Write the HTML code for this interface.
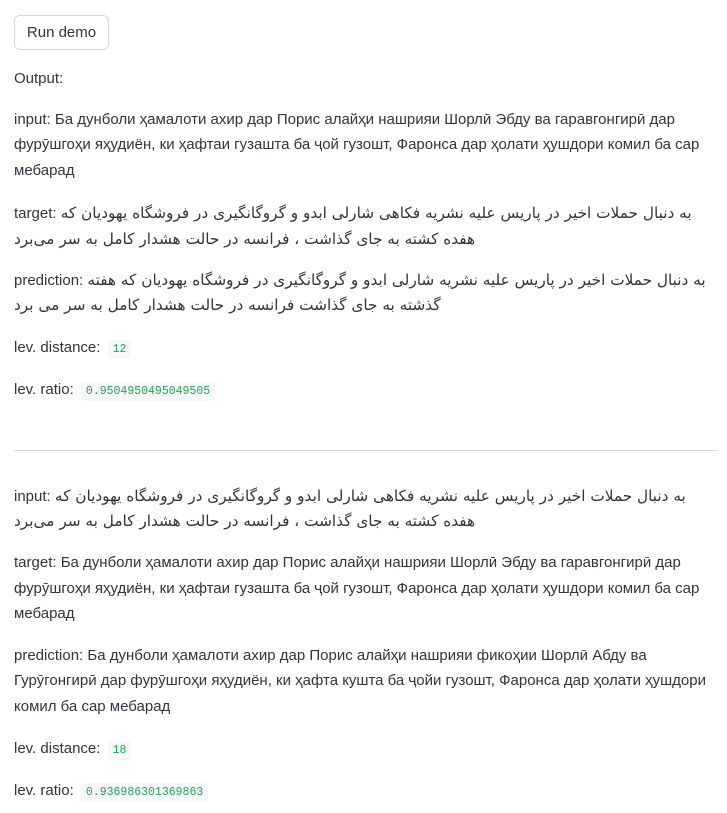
<!DOCTYPE html>
<html><head><meta charset="utf-8"><style>
body{margin:0;background:#fff;color:#31333f;font-family:"Liberation Sans","DejaVu Sans",sans-serif;font-size:15px;width:727px;height:813px;overflow:hidden;position:relative}
.l{position:absolute;left:14px;white-space:nowrap;line-height:20px;height:20px}
.btn{position:absolute;left:14px;top:15px;width:93px;height:33px;border:1px solid #d6d6d9;border-radius:6px;text-align:center;line-height:33px;font-size:15px}
code{font-family:"Liberation Mono","DejaVu Sans Mono",monospace;font-size:11.5px;color:#21a355;background:#f6f7f9;padding:3px 5px;border-radius:4px;margin-left:3px}
.hr{position:absolute;left:14px;width:704px;top:450px;height:1px;background:#d8d8dc}
.fa{font-family:"DejaVu Sans",sans-serif;font-size:15.3px}
</style></head><body>
<div class="btn">Run demo</div>
<div class="l" style="top:69px">Output:</div>

<div class="l" style="top:110px">input: Ба дунболи ҳамалоти ахир дар Порис алайҳи нашрияи Шорлӣ Эбду ва гаравгонгирӣ дар</div>
<div class="l" style="top:135px">фурӯшгоҳи яҳудиён, ки ҳафтаи гузашта ба ҷой гузошт, Фаронса дар ҳолати ҳушдори комил ба сар</div>
<div class="l" style="top:161px">мебарад</div>

<div class="l" style="top:203px">target: <span class="fa">به دنبال حملات اخیر در پاریس علیه نشریه فکاهی شارلی ابدو و گروگانگیری در فروشگاه یهودیان که</span></div>
<div class="l fa" style="top:229px">هفده کشته به جای گذاشت ، فرانسه در حالت هشدار کامل به سر می‌برد</div>

<div class="l" style="top:270px">prediction: <span class="fa">به دنبال حملات اخیر در پاریس علیه نشریه شارلی ابدو و گروگانگیری در فروشگاه یهودیان که هفته</span></div>
<div class="l fa" style="top:295px">گذشته به جای گذاشت فرانسه در حالت هشدار کامل به سر می برد</div>

<div class="l" style="top:338px">lev. distance: <code>12</code></div>
<div class="l" style="top:380px">lev. ratio: <code>0.9504950495049505</code></div>

<div class="hr"></div>

<div class="l" style="top:486px">input: <span class="fa">به دنبال حملات اخیر در پاریس علیه نشریه فکاهی شارلی ابدو و گروگانگیری در فروشگاه یهودیان که</span></div>
<div class="l fa" style="top:511px">هفده کشته به جای گذاشت ، فرانسه در حالت هشدار کامل به سر می‌برد</div>

<div class="l" style="top:553px">target: Ба дунболи ҳамалоти ахир дар Порис алайҳи нашрияи Шорлӣ Эбду ва гаравгонгирӣ дар</div>
<div class="l" style="top:579px">фурӯшгоҳи яҳудиён, ки ҳафтаи гузашта ба ҷой гузошт, Фаронса дар ҳолати ҳушдори комил ба сар</div>
<div class="l" style="top:604px">мебарад</div>

<div class="l" style="top:646px">prediction: Ба дунболи ҳамалоти ахир дар Порис алайҳи нашрияи фикоҳии Шорлӣ Абду ва</div>
<div class="l" style="top:671px">Гурӯгонгирӣ дар фурӯшгоҳи яҳудиён, ки ҳафта кушта ба ҷойи гузошт, Фаронса дар ҳолати ҳушдори</div>
<div class="l" style="top:697px">комил ба сар мебарад</div>

<div class="l" style="top:739px">lev. distance: <code>18</code></div>
<div class="l" style="top:781px">lev. ratio: <code>0.936986301369863</code></div>
</body></html>
